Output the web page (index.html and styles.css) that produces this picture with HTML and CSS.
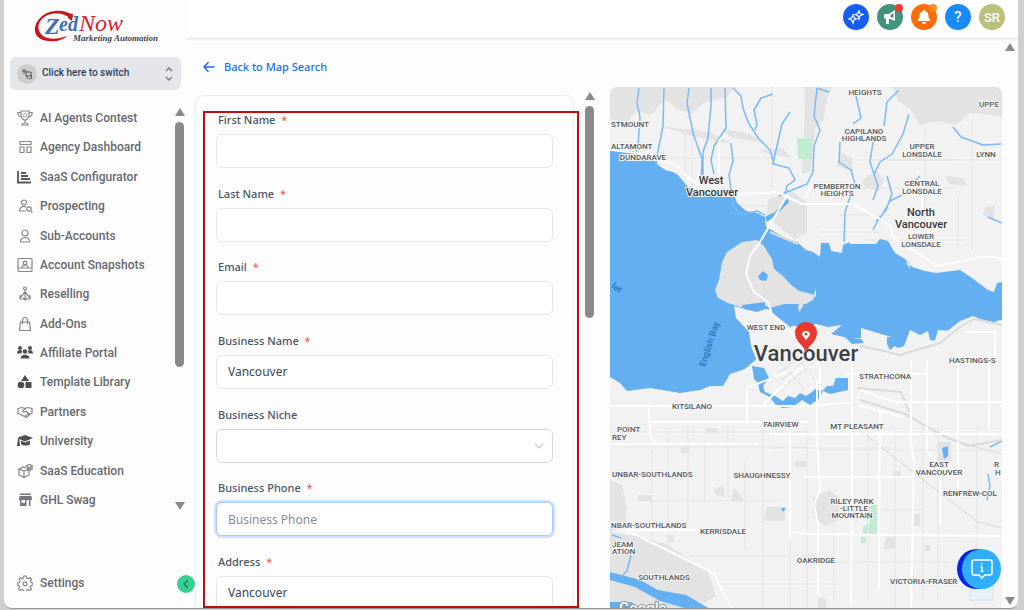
FILE: index.html
```html
<!DOCTYPE html>
<html lang="en">
<head>
  <meta charset="UTF-8" />
  <meta name="viewport" content="width=device-width, initial-scale=1.0"/>
  <title>Prospecting</title>
  <link rel="stylesheet" href="styles.css">
</head>
<body>
  <div class="window">

    <!-- Sidebar -->
    <aside class="sidebar">
      <a class="logo" href="#" aria-label="ZedNow Marketing Automation">
        <svg width="130" height="38" viewBox="32 8 130 38">
          <path d="M73 16C66 9 50 9 41 17C31 26 33 40 48 41C56 42 63 40 67 36C59 39 49 40 43 36C35 30 38 19 48 15C57 12 66 14 71 19Z" fill="#c8161d"/>
          <path d="M68 13l5 1-1 7-4-3z" fill="#c8161d"/>
          <text x="45" y="34" class="logo-zed logo-z">Z</text>
          <text x="59" y="31" class="logo-zed">ed</text>
          <text x="79" y="31" class="logo-now">Now</text>
          <text x="73" y="41" class="logo-sub">Marketing Automation</text>
        </svg>
      </a>

      <button class="switcher" type="button">
        <span class="switcher-icon">
          <svg width="12" height="12" viewBox="0 0 12 12" fill="none" stroke="#555" stroke-width="1">
            <path d="M1 3h5M3 1v5M5 4h5v4H5zM6 8v3M10 7l1 3-3 1"/>
          </svg>
        </span>
        <span class="switcher-text">Click here to switch</span>
        <svg width="8" height="14" viewBox="0 0 8 14" fill="none" stroke="#777" stroke-width="1.3">
          <path d="M1 4l3-3 3 3M1 10l3 3 3-3"/>
        </svg>
      </button>

      <div class="menu-area">
        <nav class="menu">
          <a href="#"><svg class="icon" viewBox="0 0 16 16"><path d="M4 1h8v4c0 3-2 5-4 5S4 8 4 5zM4 2.500H.8C.8 5.500 2.500 7 4.500 7M12 2.500h3.200C15.200 5.500 13.500 7 11.500 7M8 10v3M5 15c0-2 1-2 3-2s3 0 3 2z"/><path d="M8 3l.8 1.500 1.500.2-1 1 .2 1.500L8 6.500l-1.500.7.2-1.500-1-1 1.500-.2z" stroke-width=".6"/></svg>AI Agents Contest</a>
          <a href="#"><svg class="icon" viewBox="0 0 16 16"><path d="M3 2.500h11v3H3zM3 8h4v5.500H3zM10 8h4v5.500h-4z"/></svg>Agency Dashboard</a>
          <a href="#"><svg class="icon dark" viewBox="0 0 16 16"><path d="M1 2v11.500h13M4 4h5M4 7h7M4 10h9" stroke-width="1.8"/></svg>SaaS Configurator</a>
          <a href="#"><svg class="icon" viewBox="0 0 16 16"><circle cx="7" cy="4.500" r="2.500"/><path d="M9 9c-3-1.500-6.500 0-6.500 4H9M14 13l1.500 2"/><circle cx="12" cy="11" r="2.200"/></svg>Prospecting</a>
          <a href="#"><svg class="icon" viewBox="0 0 16 16"><circle cx="8" cy="5" r="3"/><path d="M3.500 14c0-6 9-6 9 0z"/></svg>Sub-Accounts</a>
          <a href="#"><svg class="icon" viewBox="0 0 16 16"><rect x="1" y="1.500" width="14" height="13" rx="1"/><circle cx="8" cy="6" r="1.800"/><path d="M5 11c0-4 6-4 6 0M1 11h14"/></svg>Account Snapshots</a>
          <a href="#"><svg class="icon" viewBox="0 0 16 16"><circle cx="8" cy="2.500" r="1.500"/><path d="M8 4v9M6 7l4 0M8 6l-5 6M8 6l5 6M6 12l2 2 2-2M3 9v4h3M13 9v4h-3"/></svg>Reselling</a>
          <a href="#"><svg class="icon" viewBox="0 0 16 16"><path d="M3.500 6h9l1 8.500h-11zM5.500 8V4.500c0-4 5-4 5 0V8"/></svg>Add-Ons</a>
          <a href="#"><svg class="icon solid" viewBox="0 0 16 16"><circle cx="3" cy="3" r="2"/><circle cx="13" cy="3" r="2"/><circle cx="8" cy="6.500" r="2.300"/><path d="M0 8.500c0-4 4-4 5-2.500L4.500 8.500zM16 8.500c0-4-4-4-5-2.500l.5 2.500zM3.500 13.500c0-5 9-5 9 0z"/></svg>Affiliate Portal</a>
          <a href="#"><svg class="icon solid" viewBox="0 0 16 16"><path d="M8 1l4 6H4zM8.500 8h6v6h-6z"/><circle cx="4" cy="11" r="3.300"/></svg>Template Library</a>
          <a href="#"><svg class="icon" viewBox="0 0 16 16"><path d="M1 4.500l4-1 3 1 3-1 4 1v5l-2 1-4 3-5-3-3-1zM8 4.500L5.500 7.500c1 1.500 2.500.5 3.500-.5l4 3.500M10 9.500l2 2M8 11l2 1.500"/></svg>Partners</a>
          <a href="#"><svg class="icon solid" viewBox="0 0 16 16"><path d="M0 5l8-3 8 3-8 3.500zM4 7.500l4 2 5-2v3.500c-2 2-7 2-9 0zM1 6h1.300l.7 7H0z"/></svg>University</a>
          <a href="#"><svg class="icon" viewBox="0 0 16 16"><path d="M2 6l4-2 3 1M2 6v6l5 2.500V8zM7 8l5-2v6l-5 2.500M9 3l3.500-1.500L15.500 3 12 5zM10.500 4.500v3l3-.5V4M15 3v4"/></svg>SaaS Education</a>
          <a href="#"><svg class="icon solid mid" viewBox="0 0 16 16"><path d="M3 1.500h11V3H3zM2.500 4h12l.5 4H2zM3 8h1.500v3H8V8h1.500v6H3zM12 8h1.500v6H12z"/></svg>GHL Swag</a>
        </nav>
        <div class="scrollbar">
          <span class="arrow up"></span>
          <span class="thumb menu-thumb"></span>
          <span class="arrow down"></span>
        </div>
      </div>

      <div class="sidebar-footer">
        <a href="#"><svg class="icon" viewBox="0 0 16 16"><path d="M6.800 1h2.400l.5 2 1.500.7 1.900-1.100 1.500 1.800-1.100 1.700.5 1.500 2 .5v2l-2 .5-.6 1.500 1 1.800-1.600 1.600-1.800-1-1.500.6-.5 1.900H7l-.6-1.900-1.500-.6-1.900 1-1.500-1.600 1-1.800L2 10.600.500 10V8l2-.5.6-1.500L2 4.300l1.600-1.700 1.800 1.100 1-.6z"/><circle cx="8" cy="8.800" r="2"/></svg>Settings</a>
        <button class="collapse" type="button" aria-label="Collapse sidebar">
          <svg width="6" height="10" viewBox="0 0 6 10" fill="none" stroke="#277a5d" stroke-width="1.400"><path d="M5 1L1 5l4 4"/></svg>
        </button>
      </div>
    </aside>

    <div class="main">
      <!-- Top bar -->
      <header class="topbar">
        <button class="round blue" type="button" aria-label="AI">
          <svg width="16" height="16" viewBox="0 0 16 16" fill="none" stroke="#fff" stroke-width="1.200"><path d="M5 6l1 2.500L8.500 10 6 11l-1 3-1.200-3L1 10l2.800-1.500zM11 2l1 2.500 3 1-3 1.200L11 10 9.800 6.700 7 5.500l2.800-1z"/></svg>
        </button>
        <button class="round green" type="button" aria-label="Announcements">
          <svg width="16" height="16" viewBox="0 0 16 16"><path d="M2 5h5l6-4v11L7 9.500V15H4V9.500H2z" fill="#fff"/><path d="M8.500 6l3-2v5l-3-1z" fill="#43937a"/></svg>
          <span class="badge red"></span>
        </button>
        <button class="round orange" type="button" aria-label="Notifications">
          <svg width="16" height="16" viewBox="0 0 16 16" fill="#fff"><path d="M8 1c1 0 1.300.6 1.300 1.300C12 3 12.500 5 12.500 8L14.500 12h-13l2-4c0-3 .5-5 3.200-5.700C6.700 1.600 7 1 8 1zM6 13h4c0 2.500-4 2.500-4 0z"/></svg>
          <span class="badge amber"></span>
        </button>
        <button class="round sky" type="button" aria-label="Help">?</button>
        <button class="round olive" type="button">SR</button>
      </header>

      <div class="page">
        <div class="content">
          <a class="back" href="#">
            <svg width="12" height="12" viewBox="0 0 12 12" fill="none" stroke="#1570ef" stroke-width="1.500"><path d="M11.500 6H1M5.500 1.200L1 6l4.500 4.800"/></svg>
            Back to Map Search
          </a>

          <div class="columns">
            <form class="form-panel">
              <div class="field">
                <label for="firstName">First Name <span class="req">*</span></label>
                <input type="text" id="firstName">
              </div>
              <div class="field">
                <label for="lastName">Last Name <span class="req">*</span></label>
                <input type="text" id="lastName">
              </div>
              <div class="field">
                <label for="email">Email <span class="req">*</span></label>
                <input type="email" id="email">
              </div>
              <div class="field">
                <label for="businessName">Business Name <span class="req">*</span></label>
                <input type="text" id="businessName" value="Vancouver">
              </div>
              <div class="field">
                <label for="niche">Business Niche</label>
                <div class="select-wrap">
                  <select id="niche"><option></option></select>
                  <svg width="10" height="6" viewBox="0 0 10 6" fill="none" stroke="#c4c7cc" stroke-width="1.200"><path d="M1 1l4 4 4-4"/></svg>
                </div>
              </div>
              <div class="field">
                <label for="phone">Business Phone <span class="req">*</span></label>
                <input type="tel" id="phone" class="focused" placeholder="Business Phone">
              </div>
              <div class="field">
                <label for="address">Address <span class="req">*</span></label>
                <input type="text" id="address" value="Vancouver">
              </div>
              <div class="highlight"></div>
            </form>

            <div class="scrollbar form-scroll">
              <span class="arrow up"></span>
              <span class="thumb form-thumb"></span>
            </div>

            <div class="map">
              <svg viewBox="610 87 392 522" preserveAspectRatio="xMidYMin slice" role="img" aria-label="Map of Vancouver">
                <rect x="610" y="87" width="392" height="522" fill="#f2f2f2"/>

                <!-- hills and parks -->
                <g fill="#e3e3e3">
                  <path d="M610 87h125l-8 10-22 5-14 12-14-5-12-10-14 16-14-4-11 12-16-4z"/>
                  <path d="M805 87h27l-5 12-4 22-8 8-4 42-9 3 2-40z"/>
                  <path d="M893 87h109v30l-18-3-14-1-14 12-20-4-16 4-10-16-12-8z"/>
                  <path d="M768 200l22-10 17 12v30l-12 8-28-23z"/>
                  <path d="M610 377l10 6 7 8-5 12-12 12zM610 480l12 5 5 22-3 20-14 5z"/>
                  <path d="M610 532l26 4 30 8 42 28 8 24-22 13h-84z"/>
                  <path d="M813 498l16-8 10 8v22l-14 6-11-8zM767 507h18v14h-22zM713 490l10-5 2 12-8-2zM730 500l5-12 10 13-8 1zM638 495h14v6h-14zM706 427h11v6h-11zM681 446h8v7h-8z"/>
                  <path d="M840 152l12 6 1 14-16-6zM862 180l14-10 8 10-6 12-14-6zM945 176l18 2 4 8-18-2zM985 207l10-2-2 16-10-6zM990 330h12v18h-12zM937 442h14v20h-14zM912 514h8v12h-8zM886 537h10v12h-12zM925 545h5v6h-5zM818 598h8v10h-8zM893 471h8v6h-8zM970 397h7v8h-7zM795 461h12v6h-12zM668 535h6v7h-6z"/>
                  <path d="M720 128l30 6 12 8-30-4zM660 126l50 6 22 12-40-8zM758 150l24-2 10 10-22-4z"/>
                </g>
                <path d="M797 138l15 1v20h-14z" fill="#c0ecd2"/>
                <path d="M869 506l8-2v30h-14v-8l7-2zM861 537h5v6h-5z" fill="#c0ecd2"/>

                <!-- side streets -->
                <g fill="none" stroke="#e5e5e5" stroke-width="1">
                  <path d="M652 450v115M668 420v150M688 405v115M705 440v60M728 400v100M745 460v90M763 400v208M790 400v208M807 410v198M834 500v100M868 400v200M895 400v209M923 350v250M938 360v240M977 350v250"/>
                  <path d="M611 432h200M625 447h180M650 501h130M690 556h130M718 584h120M770 448h120M815 425h187M820 450h180M815 510h110M820 562h130M855 428h147"/>
                  <path d="M611 158h160M611 206h155M685 130v65M692 130v62M772 87v110M855 160h100M857 188h100M865 240h100M925 130v110M958 195v54M972 120v130M890 160h112M840 215h50M820 232h60"/>
                  <path d="M860 430l58 46 60 46 24 6M853 390l55 28 50 24 44 12" stroke="#d8d8d8"/>
                </g>

                <!-- water -->
                <path fill="#63aff2" d="M610 151h23l4 4 18 6 3 4 7 5 8 2 5 3 9 11 10 6 23 5h15l2 6 9 8 11 2 8 4 1 10 9 5 10 6 12 4 9 8 7 2 7 5 1-14h8l2 8 11 2 1-8 6-3 1 2h26l4-5 8 2 7 12 10 6 7 8 13 4 11 2 24-3 12 8 16 12 6 2 3-9 5-1v42l-22-5-7-3-13 5-15 12-8 8-7-1-2-9-8 4-10-5-6 16-11 4-30-7-44-12-45 12-22 20-30 25-12 8-22 4-38-4-22 3-8-8-10-6z"/>
                <path fill="#f2f2f2" d="M610 377l10 6 7 8 23-3 30 5 20-3 10-4h13l7-12 15-5 14 2 7 10h6l-6-8-9-12-6-15-2-14-13-14-2-12 12 3h20l13 3 9 10 7 4 12 1 9-3 12 3 14-2-11 9 17 4 13 0v-10l34 10v8l13 9 15-5h9l6-20 17 1 3 13 15-9 13-10 14-5 7 3 22 5v100H610z"/>
                <path fill="#e3e3e3" d="M757 240l-15 2-15 10-5 10-3 18-4 10 3 8 10 5 12 4 20-4 10 5 14-4 22 0 8-5-2-5-13-3-9-7-7-8-9-7-2-10-8-13z"/>
                <path fill="#e3e3e3" d="M808 299l6-5 2-6v8l-6 4zM770 308l15 14-8-5zM798 305l5-2v7l-4 2zM906 263l4-2v8z"/>
                <path fill="#63aff2" d="M742 305l23-3v7l-8 3-13-3zM770 311l16-6 7 2-3 8 9-1 3-7 8 6v13l-10-3-10 4-6-5zM758 276l5-5 5 4-2 6-6-1z"/>
                <path fill="#63aff2" d="M752 366l12 2 5 10-6 8 2 6 10 4 8 5 5-5 7 2 5-5 6 3 6-4 3-3 7 2 5-5 6 0 3-8 12 0v12l-18 4-7-3-4 8-9 6-8-5-9 7-11 1-7-4-3-4-4-4-8-4-2-9-4-4z"/>
                <path fill="#63aff2" d="M887 337h11l-2 8-6 5-3-6zM942 448l6-2v10l-4 3zM845 337l16 2 3 4-12 1zM610 572l30 8 18 10 28 5 24 14h-22l-28-8-25-14-25-7zM610 602h22l4 7h-26zM781 508l5 0-3 4z"/>
                <path fill="#63aff2" d="M765 217l10-5 12-14 2 4-14 14-8 6z"/>

                <!-- creeks -->
                <g fill="none" stroke="#79bbf5" stroke-width="1.500" stroke-linejoin="round">
                  <path d="M639 88l-2 15 3 14-2 28-3 12M664 88l-1 38-5 25-2 16M689 88l-2 15 6 30 9 26-1 25M711 88v18l-3 32-5 14v28M725 88l1 40-12 18-3 14 3 14M731 143l2 18-4 14 4 30 8 10 16-4 8 4"/>
                  <path d="M733 88l8 8 2 12 5 14 10 16 12 12 4 14M773 94l-12 4-7 12 3 14-2 6M790 112l-8 12-6 26-3 14 16 4 6 12-8 6-2 8M817 88l-3 28 6 14-6 16-1 26-6 12-20 8-8 4" />
                  <path d="M817 88l12 4M899 90l-12 12-3 24M856 96l5 22-8 6M840 142l-1 20 12 8 4 14-6 16-4 12-1 30M873 142l-3 20 4 12 4 12-5 14M909 114l-6 20-11 20-12 8-6 12M887 176l5 18-6 16-8 10-5 10M902 195l-12 6-8 14-6 6M953 127l8 10 22 8 18-1M988 217l14 6M920 176l-8 8"/>
                  <path d="M988 474l2 12-3 14M990 447l12-6M631 555l-4 16-6 6M612 535l9 3"/>
                </g>

                <!-- rail -->
                <g fill="none" stroke="#d9dbdd" stroke-width="2">
                  <path d="M857 388l44 4 8 20M860 400l45 14 38 22 25 10 34-6M860 346l20 4 20 5 40-12 20-16 14-8 28 6"/>
                  <path d="M770 232l28 12"/>
                </g>

                <!-- main roads -->
                <g fill="none" stroke="#fff" stroke-width="2" stroke-linejoin="round">
                  <path d="M612 150l24 3 40 12 15 15 17 10 34 4 36-2 24 12h50l26 14 12 8 4 12 44 28 24-5 18-4h16l18 8"/>
                  <path d="M788 194l-28 48-10 14-4 18 8 18 14 10 4 12 26 26"/>
                  <path d="M719 190v-50l8-5M805 198l8-14M922 175v42"/>
                  <path d="M611 406h205l22-3h14M649 422h160M611 444h148M770 434h232M747 424v-36l40-16 27-6M763 405l40-40M800 345l20 22v32M845 374h84"/>
                  <path d="M649 406l1 30 6 8M790 430v110M817 380v60l3 50-6 14 4 20v70M852 360v100l-1 145M880 410l-1 120v60M911 360v82l3 20-3 148M927 360v90l13 20v55M958 350v150M989 350v80"/>
                  <path d="M805 477h110M625 530h125M790 532l20 2 192 2M625 530l50 24 40 20 6 15 12 20M860 390l36 12h106M858 405l46 12M965 332h30v25"/>
                </g>
                <g fill="none" stroke="#e0e0e0" stroke-width="1">
                  <path d="M776 375l26-20M780 381l30-24M785 386l32-26M778 360l26 28M790 352l26 28M768 372l14 14"/>
                </g>

                <!-- place names -->
                <g class="place">
                  <text x="865" y="95">HEIGHTS</text>
                  <text x="611" y="127" class="start">STMOUNT</text>
                  <text x="611" y="149" class="start">ALTAMONT</text>
                  <text x="643" y="160">DUNDARAVE</text>
                  <text x="979" y="107" class="start">UPPE</text>
                  <text x="864" y="134">CAPILANO</text>
                  <text x="864" y="141">HIGHLANDS</text>
                  <text x="922" y="149">UPPER</text>
                  <text x="922" y="157">LONSDALE</text>
                  <text x="986" y="157">LYNN</text>
                  <text x="837" y="189">PEMBERTON</text>
                  <text x="837" y="196">HEIGHTS</text>
                  <text x="922" y="186">CENTRAL</text>
                  <text x="922" y="194">LONSDALE</text>
                  <text x="921" y="239">LOWER</text>
                  <text x="921" y="247">LONSDALE</text>
                  <text x="766" y="330">WEST END</text>
                  <text x="949" y="363" class="start">HASTINGS-S</text>
                  <text x="885" y="379">STRATHCONA</text>
                  <text x="692" y="409">KITSILANO</text>
                  <text x="781" y="427">FAIRVIEW</text>
                  <text x="857" y="429">MT PLEASANT</text>
                  <text x="617" y="432" class="start">POINT</text>
                  <text x="612" y="440" class="start">REY</text>
                  <text x="612" y="477" class="start">UNBAR-SOUTHLANDS</text>
                  <text x="762" y="478">SHAUGHNESSY</text>
                  <text x="939" y="467">EAST</text>
                  <text x="939" y="475">VANCOUVER</text>
                  <text x="994" y="467" class="start">R</text>
                  <text x="995" y="475" class="start">H</text>
                  <text x="943" y="496" class="start">RENFREW-COL</text>
                  <text x="852" y="504">RILEY PARK</text>
                  <text x="854" y="511">-LITTLE</text>
                  <text x="852" y="518">MOUNTAIN</text>
                  <text x="611" y="528" class="start">NBAR-SOUTHLANDS</text>
                  <text x="723" y="534">KERRISDALE</text>
                  <text x="612" y="547" class="start">JEAM</text>
                  <text x="612" y="554" class="start">ATION</text>
                  <text x="816" y="563">OAKRIDGE</text>
                  <text x="664" y="580">SOUTHLANDS</text>
                  <text x="890" y="584" class="start">VICTORIA-FRASER</text>
                </g>
                <g class="city">
                  <text x="711" y="184">West</text>
                  <text x="712" y="196">Vancouver</text>
                  <text x="921" y="216">North</text>
                  <text x="921" y="228">Vancouver</text>
                </g>
                <text class="capital" x="806" y="361">Vancouver</text>
                <text class="bay" transform="translate(705 367) rotate(-72)">English Bay</text>
                <text class="bay" transform="translate(611 287) rotate(38)">let</text>
                <text class="google" x="619" y="613">Google</text>

                <!-- pin -->
                <path d="M806 353c-2-8-11-11-11-20a11 11 0 0 1 22 0c0 9-9 12-11 20z" fill="#e93a32"/>
                <path d="M806 340l-4-5a4 4 0 1 1 8 0z" fill="#fff"/>
                <circle cx="806" cy="334" r="1.500" fill="#e93a32"/>
                <rect x="970" y="578" width="23" height="22" fill="#e9f0f6" stroke="#cfe0ee"/>
              </svg>
            </div>
          </div>
        </div>

        <div class="scrollbar page-scroll">
          <span class="arrow up"></span>
          <span class="arrow down"></span>
        </div>
      </div>
    </div>
  </div>

  <button class="chat" type="button" aria-label="Chat">
    <svg width="24" height="24" viewBox="0 0 24 24" fill="none" stroke="#fff" stroke-width="1.500"><path d="M4 3h16c1 0 2 1 2 2v11c0 1-1 2-2 2h-5l-3 3-3-3H4c-1 0-2-1-2-2V5c0-1 1-2 2-2z"/><path d="M12 9.500v5M10.500 9.500H12M10.500 14.500h3M12 6v1.500"/></svg>
  </button>
</body>
</html>
```
FILE: styles.css
```css
* {
  box-sizing: border-box;
}

body {
  margin: 0;
  height: 100vh;
  padding: 0 6px 1px 4px;
  overflow: hidden;
  background-color: #cfcfcf;
  font-family: Roboto, "Liberation Sans", sans-serif;
  font-size: 12px;
}

a {
  text-decoration: none;
}

button {
  border: none;
  padding: 0;
  cursor: pointer;
  font-family: inherit;
}

svg {
  flex-shrink: 0;
}

.window {
  display: flex;
  height: 100%;
  overflow: hidden;
  background-color: #fdfdfe;
  border-bottom: 1px solid #999;
  border-radius: 0 0 8px 8px;
}

/* Sidebar */
.sidebar {
  display: flex;
  flex-direction: column;
  width: 183px;
  flex-shrink: 0;
}

.logo {
  display: block;
  height: 57px;
  padding: 8px 0 0 28px;
}

.logo-zed,
.logo-now {
  font-family: "Liberation Serif", serif;
  font-style: italic;
  font-weight: bold;
  font-size: 20px;
  fill: #3f6fb5;
}

.logo-z {
  font-size: 24px;
}

.logo-now {
  font-size: 24px;
  font-weight: normal;
  fill: #d3242b;
}

.logo-sub {
  font-family: "Liberation Serif", serif;
  font-style: italic;
  font-weight: bold;
  font-size: 9px;
  fill: #444;
}

.switcher {
  display: flex;
  align-items: center;
  height: 33px;
  margin: 0 6px;
  padding: 0 8px 0 7px;
  background-color: #e4e6ea;
  border-radius: 6px;
}

.switcher-icon {
  display: flex;
  align-items: center;
  justify-content: center;
  width: 20px;
  height: 20px;
  margin-right: 5px;
  border-radius: 50%;
  background-color: #cdcdcd;
}

.switcher-text {
  flex: 1;
  padding-bottom: 3px;
  text-align: left;
  font-size: 10px;
  font-weight: 500;
  color: #2f3f5c;
}

.menu-area {
  display: flex;
  flex: 1;
  justify-content: space-between;
  padding: 18px 3px 0 13px;
}

.menu {
  display: flex;
  flex-direction: column;
  justify-content: space-between;
}

.menu a,
.sidebar-footer a {
  display: flex;
  align-items: center;
  gap: 7px;
  line-height: 20px;
  font-weight: 500;
  color: #66696d;
}

.icon {
  width: 16px;
  height: 16px;
  fill: none;
  stroke: #85888c;
  stroke-width: 1.2;
}

.icon.dark {
  stroke: #55585c;
}

.icon.solid {
  fill: #4b4e52;
  stroke: none;
}

.icon.mid {
  fill: #74777b;
}

.sidebar-footer {
  display: flex;
  align-items: flex-end;
  justify-content: space-between;
  height: 98px;
  padding: 0 0 15px 13px;
}

.collapse {
  width: 18px;
  height: 18px;
  margin-right: -8px;
  border-radius: 50%;
  background-color: #38cf95;
  z-index: 1;
}

.collapse svg {
  display: block;
  margin: 0 auto;
}

/* Scrollbars */
.scrollbar {
  display: flex;
  flex-direction: column;
  align-items: center;
  width: 9px;
}

.arrow {
  border: 5px solid transparent;
}

.arrow.up {
  border-top: none;
  border-bottom: 8px solid #8a8a8a;
}

.arrow.down {
  margin-top: auto;
  border-bottom: none;
  border-top: 8px solid #8a8a8a;
}

.thumb {
  width: 9px;
  margin-top: 6px;
  border-radius: 5px;
  background-color: #8a8a8a;
}

.menu-thumb {
  height: 61%;
}

.form-thumb {
  height: 41%;
}

/* Main */
.main {
  display: flex;
  flex-direction: column;
  flex: 1;
  min-width: 0;
}

.topbar {
  display: flex;
  align-items: flex-start;
  justify-content: flex-end;
  gap: 8px;
  height: 39px;
  padding: 4px 13px 0 0;
  background-color: #fff;
  border-bottom: 1px solid #e3e6ec;
  box-shadow: 0 1px 2px #e8ebf0;
}

.round {
  position: relative;
  display: flex;
  align-items: center;
  justify-content: center;
  width: 26px;
  height: 26px;
  border-radius: 50%;
  color: #fff;
  font-size: 13px;
  font-weight: 500;
}

.blue { background-color: #155eef; }
.green { background-color: #43937a; }
.orange { background-color: #ff6b05; }
.sky { background-color: #188bf6; font-size: 15px; }
.olive { background-color: #b9bf7c; }

.badge {
  position: absolute;
  top: 0;
  right: 0;
  width: 8px;
  height: 8px;
  border-radius: 50%;
}

.badge.red { background-color: #f5382c; }
.badge.amber { background-color: #ff8a1f; }

.page {
  display: flex;
  flex: 1;
  min-height: 0;
}

.content {
  display: flex;
  flex-direction: column;
  flex: 1;
  min-width: 0;
  padding-left: 8px;
}

.back {
  display: flex;
  align-items: center;
  align-self: flex-start;
  gap: 9px;
  height: 48px;
  padding: 7px 0 0 8px;
  line-height: 20px;
  color: #1570ef;
  font-family: "Noto Sans", sans-serif;
  font-size: 11px;
  font-weight: 500;
}

.columns {
  display: grid;
  grid-template-columns: minmax(0, 379fr) 36px minmax(0, 392fr);
  grid-template-rows: minmax(0, 1fr);
  flex: 1;
  min-height: 0;
}

.form-panel {
  position: relative;
  display: flex;
  flex-direction: column;
  justify-content: space-between;
  margin: 8px 0 -2px;
  padding: 16px 20px 0;
  border: 1px solid #ebedf2;
  border-bottom: none;
  border-radius: 8px 8px 0 0;
  font-family: "Noto Sans", sans-serif;
}

.highlight {
  position: absolute;
  inset: 15px -6px 2px 7px;
  border: 2px solid #c00d0d;
  pointer-events: none;
}

.field label {
  display: block;
  padding-left: 2px;
  margin-bottom: 6px;
  font-size: 11px;
  line-height: 16px;
  font-weight: 500;
  color: #4b5563;
}

.req {
  margin-left: 3px;
  color: #e5674f;
}

.field input,
.field select {
  display: block;
  width: 100%;
  height: 34px;
  padding: 0 11px;
  border: 1px solid #e4e7ec;
  border-radius: 6px;
  background-color: #fff;
  font-family: inherit;
  font-size: 12px;
  color: #3b4354;
  outline: none;
}

.field input::placeholder {
  color: #868c96;
  opacity: 1;
}

.field select {
  appearance: none;
  border-color: #d3d7de;
}

.field .focused {
  border-color: #a6c8fb;
  box-shadow: 0 0 0 2px #cfe0fc;
}

.select-wrap {
  position: relative;
}

.select-wrap svg {
  position: absolute;
  top: 14px;
  right: 9px;
}

.form-scroll {
  margin: 5px 0 0 11px;
}

.map {
  overflow: hidden;
  border-radius: 7px 7px 0 0;
}

.map svg {
  display: block;
  width: 100%;
  height: 100%;
}

.place text,
.city text,
.capital {
  font-weight: 500;
  text-anchor: middle;
  stroke: #f6f6f6;
  stroke-width: 2px;
  paint-order: stroke;
}

.place text {
  font-size: 8px;
  fill: #55585c;
}

.place .start {
  text-anchor: start;
}

.city text {
  font-size: 11px;
  fill: #34373b;
}

.capital {
  font-size: 22px;
  fill: #3c3f43;
}

.bay {
  font-size: 9px;
  font-weight: 500;
  fill: #2d74c0;
}

.google {
  font-size: 15px;
  font-weight: 500;
  fill: #fff;
  stroke: #8d949c;
  stroke-width: 2px;
  paint-order: stroke;
}

.page-scroll {
  width: 16px;
  padding: 4px 0 3px;
}

/* Chat bubble */
.chat {
  position: absolute;
  right: 23px;
  bottom: 21px;
  display: flex;
  align-items: center;
  justify-content: center;
  width: 39px;
  height: 40px;
  border-radius: 50%;
  background-color: #30adfd;
  box-shadow: -5px 0 0 #0526e8;
}
```
